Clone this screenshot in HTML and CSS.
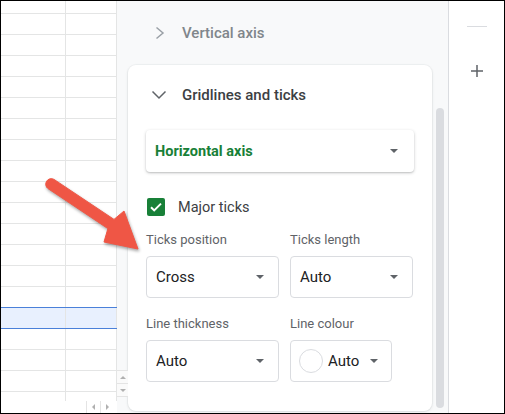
FILE: index.html
```html
<!DOCTYPE html>
<html lang="en">

<head>
    <meta charset="UTF-8">
    <meta name="viewport" content="width=device-width, initial-scale=1.0">
    <title>Chart editor - Gridlines and ticks</title>
    <link rel="stylesheet" href="styles.css">
</head>

<body>
    <div class="screen">
        <div class="sheet">
            <div class="rows">
                <div class="row first"><span class="cell"></span><span class="cell"></span></div>
                <div class="row"><span class="cell"></span><span class="cell"></span></div>
                <div class="row"><span class="cell"></span><span class="cell"></span></div>
                <div class="row"><span class="cell"></span><span class="cell"></span></div>
                <div class="row"><span class="cell"></span><span class="cell"></span></div>
                <div class="row"><span class="cell"></span><span class="cell"></span></div>
                <div class="row"><span class="cell"></span><span class="cell"></span></div>
                <div class="row"><span class="cell"></span><span class="cell"></span></div>
                <div class="row"><span class="cell"></span><span class="cell"></span></div>
                <div class="row"><span class="cell"></span><span class="cell"></span></div>
                <div class="row"><span class="cell"></span><span class="cell"></span></div>
                <div class="row"><span class="cell"></span><span class="cell"></span></div>
                <div class="row"><span class="cell"></span><span class="cell"></span></div>
                <div class="row"><span class="cell"></span><span class="cell"></span></div>
                <div class="row"><span class="cell"></span><span class="cell"></span></div>
                <div class="row selected"><span class="cell"></span><span class="cell"></span></div>
                <div class="row"><span class="cell"></span><span class="cell"></span></div>
                <div class="row"><span class="cell"></span><span class="cell"></span></div>
                <div class="row"><span class="cell"></span><span class="cell"></span></div>
                <div class="row"><span class="cell"></span><span class="cell"></span></div>
            </div>
            <div class="hscroll">
                <span class="hbtn"><i class="tri-left"></i></span>
                <span class="hbtn"><i class="tri-right"></i></span>
            </div>
            <!-- vertical scroll arrows sit over the gutter -->
            <div class="vscroll">
                <span class="vbtn"><i class="tri-up"></i></span>
                <span class="vbtn"><i class="tri-down"></i></span>
            </div>
        </div>

        <div class="panel">
            <div class="panel-main">
                <div class="section-head collapsed">
                    <svg class="chev-right" width="12" height="14" viewBox="0 0 12 14">
                        <path d="M2.5 1.5l6.5 5.5-6.5 5.5" fill="none" stroke="#9aa0a6" stroke-width="1.5" />
                    </svg>
                    <span>Vertical axis</span>
                </div>

                <div class="card">
                    <div class="section-head">
                        <svg class="chev-down" width="16" height="10" viewBox="0 0 16 10">
                            <path d="M1.5 1.5l6.5 6.5 6.5-6.5" fill="none" stroke="#5f6368" stroke-width="1.5" />
                        </svg>
                        <span>Gridlines and ticks</span>
                    </div>

                    <div class="select raised">
                        <span class="select-value green">Horizontal axis</span>
                        <i class="caret"></i>
                    </div>

                    <label class="check-row">
                        <span class="checkbox">
                            <svg width="18" height="18" viewBox="0 0 18 18">
                                <path d="M4 9.2l3.2 3.2 6.8-6.8" fill="none" stroke="#fff" stroke-width="2" />
                            </svg>
                        </span>
                        <span>Major ticks</span>
                    </label>

                    <div class="fields">
                        <div class="field">
                            <div class="field-label">Ticks position</div>
                            <div class="select">
                                <span class="select-value">Cross</span>
                                <i class="caret"></i>
                            </div>
                        </div>
                        <div class="field">
                            <div class="field-label">Ticks length</div>
                            <div class="select">
                                <span class="select-value">Auto</span>
                                <i class="caret"></i>
                            </div>
                        </div>
                        <div class="field">
                            <div class="field-label">Line thickness</div>
                            <div class="select">
                                <span class="select-value">Auto</span>
                                <i class="caret"></i>
                            </div>
                        </div>
                        <div class="field">
                            <div class="field-label">Line colour</div>
                            <div class="select colour">
                                <span class="swatch"></span>
                                <span class="select-value">Auto</span>
                                <i class="caret"></i>
                            </div>
                        </div>
                    </div>
                </div>
            </div>
            <div class="scroll-thumb"></div>
        </div>

        <div class="sidebar">
            <span class="dash"></span>
            <svg class="plus" width="12" height="12" viewBox="0 0 12 12">
                <path d="M6 0v12M0 6h12" stroke="#5f6368" stroke-width="1.5" />
            </svg>
        </div>

        <!-- callout arrow -->
        <svg class="callout" width="110" height="90" viewBox="40 170 110 90">
            <path d="M54 179.4L114 219.4L124 211L138 249L104 242L107.9 228.6L48 188.6A5.5 5.5 0 0 1 54 179.4Z"
                fill="#ef5645" stroke="#ef5645" stroke-width="1" stroke-linejoin="round" />
        </svg>
    </div>
</body>

</html>
```

FILE: styles.css
```css
* {
    margin: 0;
    padding: 0;
    box-sizing: border-box;
}

body {
    background: #fff;
    font-family: 'Roboto', 'Liberation Sans', Arial, sans-serif;
}

.screen {
    position: relative;
    display: flex;
    width: 505px;
    height: 414px;
    border: 1px solid #000;
    overflow: hidden;
}

/* spreadsheet on the left */
.sheet {
    position: relative;
    display: flex;
    flex-direction: column;
    width: 116px;
    flex-shrink: 0;
}

.rows {
    flex: 1;
    overflow: hidden;
}

.row {
    display: flex;
    height: 21px;
    border-bottom: 1px solid #e4e5e5;
}

.row.first {
    height: 13px;
}

.row.selected {
    background: #e8f0fe;
    border-bottom-color: #4a80d9;
    box-shadow: 0 -1px 0 #4a80d9;
}

.cell {
    height: 100%;
    border-right: 1px solid #e4e5e5;
}

.cell:first-child {
    width: 65px;
}

.cell:last-child {
    width: 51px;
}

.hscroll {
    display: flex;
    justify-content: flex-end;
    height: 12px;
    padding-right: 3px;
}

.hbtn {
    display: flex;
    align-items: center;
    justify-content: center;
    width: 14px;
    border-left: 1px solid #e4e4e4;
}

.tri-left,
.tri-right,
.tri-up,
.tri-down {
    display: block;
    width: 0;
    height: 0;
}

.tri-left {
    border-top: 3px solid transparent;
    border-bottom: 3px solid transparent;
    border-right: 3px solid #b0b0b0;
}

.tri-right {
    border-top: 3px solid transparent;
    border-bottom: 3px solid transparent;
    border-left: 3px solid #b0b0b0;
}

.vscroll {
    position: absolute;
    left: 116px;
    top: 369px;
    display: flex;
    flex-direction: column;
    width: 11px;
    background: #fafafa;
    border-top: 1px solid #e4e4e4;
}

.vbtn {
    display: flex;
    align-items: center;
    justify-content: center;
    height: 13px;
    border-bottom: 1px solid #e4e4e4;
}

.tri-up {
    border-left: 3px solid transparent;
    border-right: 3px solid transparent;
    border-bottom: 3px solid #b0b0b0;
}

.tri-down {
    border-left: 3px solid transparent;
    border-right: 3px solid transparent;
    border-top: 3px solid #b0b0b0;
}

/* chart editor panel */
.panel {
    display: flex;
    width: 331px;
    flex-shrink: 0;
    padding-left: 11px;
    background: #f8f9fa;
}

.panel-main {
    width: 304px;
    display: flex;
    flex-direction: column;
}

.scroll-thumb {
    width: 8px;
    height: 300px;
    margin: 107px 0 0 4px;
    border-radius: 4px;
    background: #dadce0;
}

.section-head {
    display: flex;
    align-items: center;
    font-size: 15px;
    font-weight: 500;
    color: #3c4043;
}

.section-head.collapsed {
    height: 64px;
    color: #80868b;
}

.chev-right {
    margin: 0 16px 0 26px;
}

.card {
    height: 346px;
    padding: 0 18px;
    background: #fff;
    border-radius: 8px;
    box-shadow: 0 0 0 1px rgba(60, 64, 67, 0.04), 0 1px 3px rgba(60, 64, 67, 0.12);
}

.card .section-head {
    height: 60px;
}

.chev-down {
    margin: 0 15px 0 5px;
}

.select {
    display: flex;
    align-items: center;
    height: 42px;
    padding: 0 14px 0 9px;
    border: 1px solid #dadce0;
    border-radius: 4px;
    background: #fff;
}

.select.raised {
    margin-top: 5px;
    padding: 0 15px 0 8px;
    border-color: transparent;
    box-shadow: 0 1px 3px rgba(60, 64, 67, 0.3), 0 1px 1px rgba(60, 64, 67, 0.08);
}

.select-value {
    flex: 1;
    font-size: 15px;
    color: #202124;
}

.select-value.green {
    font-size: 14.5px;
    font-weight: 700;
    color: #188038;
}

.caret {
    display: block;
    width: 0;
    height: 0;
    border-left: 4px solid transparent;
    border-right: 4px solid transparent;
    border-top: 4px solid #5f6368;
}

.check-row {
    display: flex;
    align-items: center;
    height: 24px;
    margin-top: 23px;
    font-size: 14.5px;
    color: #3c4043;
}

.checkbox {
    display: flex;
    width: 18px;
    height: 18px;
    margin: 0 13px 0 1px;
    border-radius: 2px;
    background: #188038;
}

.fields {
    display: grid;
    grid-template-columns: 133px 123px;
    column-gap: 11px;
    row-gap: 18px;
    margin-top: 13px;
}

.field-label {
    height: 16px;
    line-height: 16px;
    margin-bottom: 8px;
    font-size: 13px;
    color: #5f6368;
}

.select.colour {
    width: 102px;
    padding: 0 13px 0 8px;
}

.swatch {
    width: 24px;
    height: 24px;
    margin-right: 5px;
    border: 1px solid #dadce0;
    border-radius: 50%;
}

/* right side strip */
.sidebar {
    display: flex;
    flex-direction: column;
    align-items: center;
    width: 56px;
    border-left: 1px solid #dadce0;
}

.dash {
    width: 20px;
    height: 1px;
    margin-top: 25px;
    background: #dadce0;
}

.plus {
    margin-top: 38px;
}

.callout {
    position: absolute;
    left: 39px;
    top: 169px;
    pointer-events: none;
    filter: drop-shadow(1px 2px 1.5px rgba(0, 0, 0, 0.35));
}
```
